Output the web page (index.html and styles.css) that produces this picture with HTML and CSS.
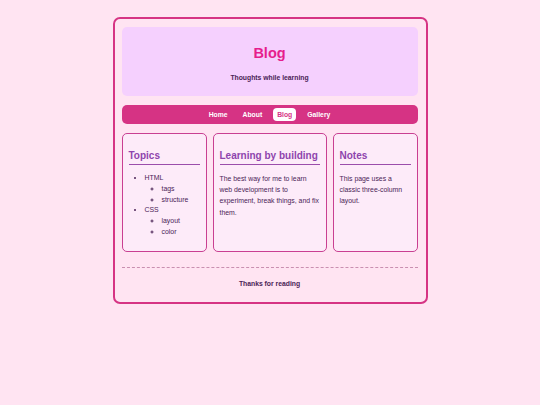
FILE: index.html
```html
<!DOCTYPE html>
<html>
<head>
<meta charset="utf-8">
<link rel="stylesheet" href="styles.css">
</head>
<body>
<div class="page">
  <header class="hero">
    <h1 class="title">Blog</h1>
    <p class="tagline">Thoughts while learning</p>
  </header>
  <nav class="nav">
    <a class="nav-link">Home</a>
    <a class="nav-link">About</a>
    <a class="nav-link active">Blog</a>
    <a class="nav-link">Gallery</a>
  </nav>
  <main class="columns">
    <section class="col">
      <h2 class="col-title">Topics</h2>
      <ul class="list">
        <li>HTML
          <ul class="sublist">
            <li>tags</li>
            <li>structure</li>
          </ul>
        </li>
        <li>CSS
          <ul class="sublist">
            <li>layout</li>
            <li>color</li>
          </ul>
        </li>
      </ul>
    </section>
    <section class="col">
      <h2 class="col-title">Learning by building</h2>
      <p class="text">The best way for me to learn web development is to experiment, break things, and fix them.</p>
    </section>
    <section class="col">
      <h2 class="col-title">Notes</h2>
      <p class="text">This page uses a classic three-column layout.</p>
    </section>
  </main>
  <footer class="footer">Thanks for reading</footer>
</div>
</body>
</html>
```
FILE: styles.css
```css
html, body {
  margin: 0;
  padding: 0;
}
body {
  background: #ffe4f2;
  font-family: "Liberation Sans", Arial, sans-serif;
  color: #4a2356;
  padding-top: 17px;
}
.page {
  width: 296px;
  margin: 0 auto;
  border: 2px solid #d63384;
  border-radius: 7px;
  padding: 8px 8px 8px 7px;
  background: #ffe4f2;
}
.hero {
  background: #f5d0fe;
  border-radius: 5px;
  height: 69px;
  display: flex;
  flex-direction: column;
  align-items: center;
}
.title {
  margin: 17px 0 0;
  font-size: 14.5px;
  line-height: 18px;
  color: #e61d8c;
  font-weight: bold;
}
.tagline {
  margin: 11px 0 0;
  font-size: 6.8px;
  line-height: 9px;
  font-weight: bold;
  color: #4a2356;
}
.nav {
  margin-top: 9px;
  background: #d63384;
  border-radius: 5px;
  padding: 3px 0;
  display: flex;
  justify-content: center;
  gap: 7px;
}
.nav-link {
  font-size: 6.8px;
  line-height: 9px;
  font-weight: bold;
  color: #ffffff;
  padding: 2px 4px;
  border-radius: 4px;
}
.nav-link.active {
  background: #ffffff;
  color: #d63384;
}
.columns {
  margin-top: 9px;
  display: grid;
  grid-template-columns: 85fr 114fr 85fr;
  gap: 6px;
}
.col {
  background: #fdebf9;
  border: 1px solid #c93f92;
  border-radius: 5px;
  padding: 7px 6px 8px;
  height: 102px;
}
.col-title {
  margin: 9px 0 0;
  font-size: 10px;
  line-height: 12px;
  font-weight: bold;
  color: #8e44ad;
  padding-bottom: 2px;
  border-bottom: 1px solid #9b4dab;
  white-space: nowrap;
}
.list, .sublist {
  margin: 0;
  padding-left: 16px;
  font-size: 6.9px;
  line-height: 10.8px;
}
.list {
  margin-top: 8px;
}
.sublist {
  padding-left: 17px;
  list-style: circle;
}
.text {
  margin: 8px 0 0;
  font-size: 6.88px;
  line-height: 11.2px;
}
.footer {
  margin-top: 15px;
  border-top: 1px dashed #c98fb0;
  padding: 11px 0 6px;
  text-align: center;
  font-size: 6.8px;
  line-height: 9px;
  font-weight: bold;
  color: #4a2356;
}
```
